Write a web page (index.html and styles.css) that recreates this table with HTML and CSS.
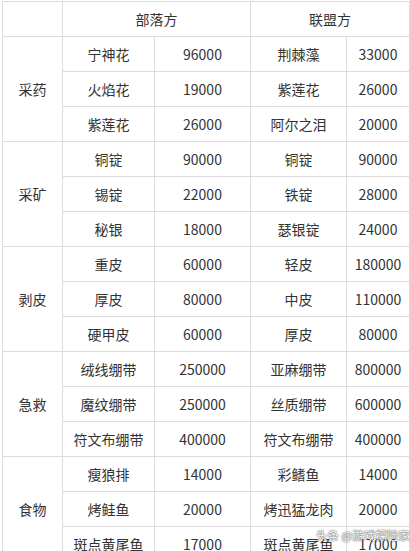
FILE: index.html
```html
<!DOCTYPE html>
<html lang="zh-CN">
<head>
<meta charset="utf-8">
<link rel="stylesheet" href="styles.css">
</head>
<body>
<div class="page">
<table class="price">
<colgroup>
<col class="c1"><col class="c2"><col class="c3"><col class="c4"><col class="c5">
</colgroup>
<tr><td></td><td colspan="2">部落方</td><td colspan="2">联盟方</td></tr>
<tr><td rowspan="3">采药</td><td>宁神花</td><td>96000</td><td>荆棘藻</td><td>33000</td></tr>
<tr><td>火焰花</td><td>19000</td><td>紫莲花</td><td>26000</td></tr>
<tr><td>紫莲花</td><td>26000</td><td>阿尔之泪</td><td>20000</td></tr>
<tr><td rowspan="3">采矿</td><td>铜锭</td><td>90000</td><td>铜锭</td><td>90000</td></tr>
<tr><td>锡锭</td><td>22000</td><td>铁锭</td><td>28000</td></tr>
<tr><td>秘银</td><td>18000</td><td>瑟银锭</td><td>24000</td></tr>
<tr><td rowspan="3">剥皮</td><td>重皮</td><td>60000</td><td>轻皮</td><td>180000</td></tr>
<tr><td>厚皮</td><td>80000</td><td>中皮</td><td>110000</td></tr>
<tr><td>硬甲皮</td><td>60000</td><td>厚皮</td><td>80000</td></tr>
<tr><td rowspan="3">急救</td><td>绒线绷带</td><td>250000</td><td>亚麻绷带</td><td>800000</td></tr>
<tr><td>魔纹绷带</td><td>250000</td><td>丝质绷带</td><td>600000</td></tr>
<tr><td>符文布绷带</td><td>400000</td><td>符文布绷带</td><td>400000</td></tr>
<tr><td rowspan="3">食物</td><td>瘦狼排</td><td>14000</td><td>彩鳍鱼</td><td>14000</td></tr>
<tr><td>烤鲑鱼</td><td>20000</td><td>烤迅猛龙肉</td><td>20000</td></tr>
<tr><td>斑点黄尾鱼</td><td>17000</td><td>斑点黄尾鱼</td><td>17000</td></tr>
</table>
<div class="watermark">头条 @游戏探险家</div>
</div>
</body>
</html>
```

FILE: styles.css
```css
html, body {
  margin: 0;
  padding: 0;
  background: #fff;
}
.page {
  position: relative;
  width: 410px;
  height: 551px;
  overflow: hidden;
  padding: 1px 0 0 2px;
  box-sizing: border-box;
}
.price {
  border-collapse: collapse;
  table-layout: fixed;
  width: 407px;
  font-family: "Microsoft YaHei", "Noto Sans CJK SC", "Noto Sans", sans-serif;
  font-size: 14px;
  color: #333;
}
.c1 { width: 60px; }
.c2 { width: 92px; }
.c3 { width: 96px; }
.c4 { width: 96px; }
.c5 { width: 63px; }
.price td {
  border: 1px solid #dcdcdc;
  height: 34px;
  padding: 0;
  text-align: center;
  vertical-align: middle;
  white-space: nowrap;
}
.watermark {
  position: absolute;
  left: 316px;
  top: 527px;
  font-family: "Noto Sans CJK SC", sans-serif;
  font-size: 11.5px;
  color: #fff;
  text-shadow: 0 0 1px #444, 0 0 2px rgba(0,0,0,0.6);
  white-space: nowrap;
}
```
